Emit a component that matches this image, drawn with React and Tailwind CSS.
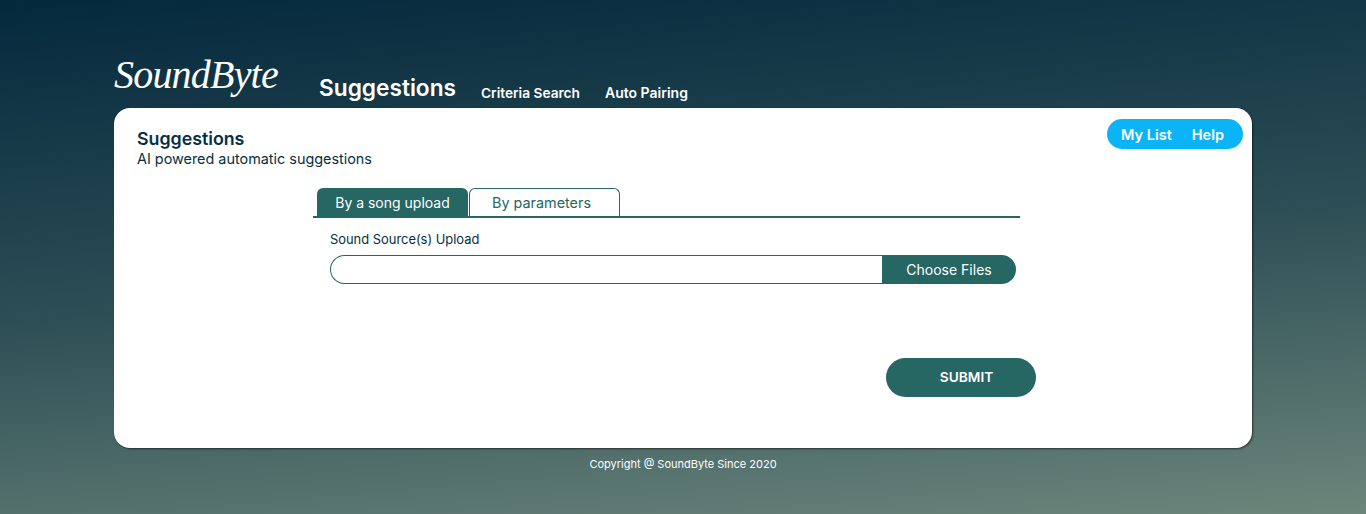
const font = "[font-family:Inter,'Liberation_Sans',sans-serif]";

const App = () => {
  return (
    <div className={`h-[514px] overflow-hidden bg-[linear-gradient(175deg,#04293d_0%,#2e4f56_52%,#6c867b_100%)] ${font}`}>
      <div className="mx-[114px] w-[1138px] pt-[42px]">
        <div className="flex h-[66px] items-end">
          <div className="mb-[1px] w-[205px] text-[40px] leading-[64px] italic tracking-[-0.8px] text-white [font-family:'Liberation_Serif',serif]">
            SoundByte
          </div>
          <div className="mb-[6px] text-[22.7px] leading-[28px] font-semibold text-white">Suggestions</div>
          <div className="mb-[5px] ml-[25px] text-[13.7px] leading-[20px] font-semibold text-white">Criteria Search</div>
          <div className="mb-[5px] ml-[25px] text-[14px] leading-[20px] font-semibold text-white">Auto Pairing</div>
        </div>

        <div className="relative h-[340px] rounded-[16px] bg-white pl-[23px] pt-[21px] shadow-[1px_1px_2px_rgba(0,0,0,0.55)]">
          <div className="absolute right-[9px] top-[11px] flex h-[30px] items-center gap-[20px] rounded-full bg-[#0bb4f7] pl-[14px] pr-[19px] pt-[2px] text-[14.5px] font-semibold text-white">
            <span>My List</span>
            <span>Help</span>
          </div>

          <div className="text-[17.8px] leading-[20px] font-semibold text-[#06303f]">Suggestions</div>
          <div className="text-[14.4px] leading-[20px] text-[#06303f]">AI powered automatic suggestions</div>

          <div className="ml-[176px] mt-[19px] w-[707px]">
            <div className="flex h-[30px] gap-px border-b-2 border-[#266663] pl-[4px]">
              <div className="flex h-[28px] w-[151px] items-center justify-center rounded-t-[6px] bg-[#266663] text-[14px] text-white">
                By a song upload
              </div>
              <div className="flex h-[28px] w-[151px] items-center justify-center rounded-t-[6px] border border-b-0 border-[#266663] pr-[6px] text-[14.4px] text-[#266663]">
                By parameters
              </div>
            </div>

            <div className="ml-[17px] mt-[13px] text-[12.9px] leading-[18px] text-[#06303f]">Sound Source(s) Upload</div>

            <div className="ml-[17px] mt-[6px] flex h-[29px] w-[686px]">
              <div className="flex-1 rounded-l-full border border-r-0 border-[#266663]"></div>
              <div className="flex w-[134px] items-center justify-center rounded-r-full bg-[#266663] text-[14px] text-white">
                Choose Files
              </div>
            </div>

            <div className="mt-[74px] flex justify-end">
              <button className="mr-[-16px] flex h-[39px] w-[150px] items-center justify-center rounded-full bg-[#266663] pl-[11px] text-[13.7px] font-semibold text-white">
                SUBMIT
              </button>
            </div>
          </div>
        </div>

        <div className="mt-[8px] text-center text-[11px] leading-[16px] text-white">Copyright @ SoundByte Since 2020</div>
      </div>
    </div>
  );
};

export default App;
